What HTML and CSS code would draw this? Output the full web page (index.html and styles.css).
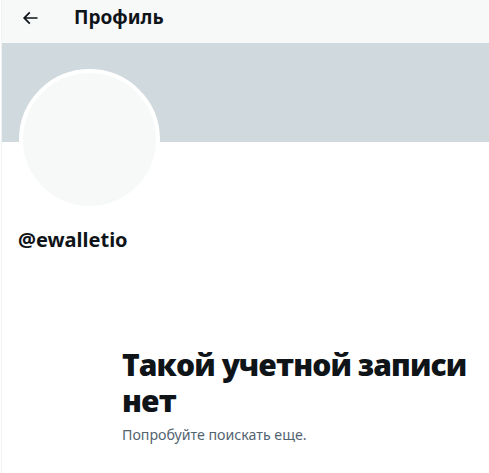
FILE: index.html
```html
<!DOCTYPE html>
<html>
<head>
    <meta charset="utf-8">
    <title>Профиль</title>
    <link rel="stylesheet" href="styles.css">
</head>
<body>
    <div class="page">
        <div class="topbar">
            <button class="back" aria-label="Назад">
                <svg viewBox="0 0 24 24" width="20" height="20">
                    <path d="M7.414 13l5.043 5.04-1.414 1.42L3.586 12l7.457-7.46 1.414 1.42L7.414 11H21v2H7.414z"/>
                </svg>
            </button>
            <h2 class="title">Профиль</h2>
        </div>

        <div class="banner"></div>

        <div class="profile">
            <div class="avatar"></div>
            <div class="handle">@ewalletio</div>
        </div>

        <div class="empty">
            <h1>Такой учетной записи нет</h1>
            <p>Попробуйте поискать еще.</p>
        </div>
    </div>
</body>
</html>
```

FILE: styles.css
```css
body {
    margin: 0;
    font-family: "Noto Sans", "Open Sans", sans-serif;
    color: #0f1419;
    background: #fff;
}
.page {
    border-left: 1px solid #eff3f4;
    margin-left: 1px;
    height: 473px;
    overflow: hidden;
}
.topbar {
    height: 43px;
    background: #f7f9f9;
    display: flex;
    align-items: center;
}
.back {
    border: none;
    background: none;
    padding: 0;
    margin-left: 16px;
    width: 24px;
    height: 24px;
    display: flex;
    align-items: center;
    justify-content: center;
    margin-top: -8px;
}
.back svg {
    fill: #0f1419;
}
.title {
    margin: -9px 0 0 32px;
    font-size: 19px;
    font-weight: 700;
}
.banner {
    height: 99px;
    background: #cfd9de;
}
.profile {
    padding: 0 16px;
}
.avatar {
    width: 133px;
    height: 133px;
    border-radius: 50%;
    background: #f7f9f9;
    border: 4px solid #fff;
    margin-top: -73px;
    margin-left: 1px;
}
.handle {
    margin-top: 16px;
    font-size: 20px;
    font-weight: 700;
}
.empty {
    margin: 94px 0 0 120px;
    width: 360px;
}
.empty h1 {
    margin: 0;
    font-family: "Open Sans", "Noto Sans", sans-serif;
    font-size: 30px;
    font-weight: 800;
    line-height: 36px;
    letter-spacing: -0.9px;
}
.empty p {
    margin: 6px 0 0;
    font-size: 14.2px;
    color: #536471;
}
```
